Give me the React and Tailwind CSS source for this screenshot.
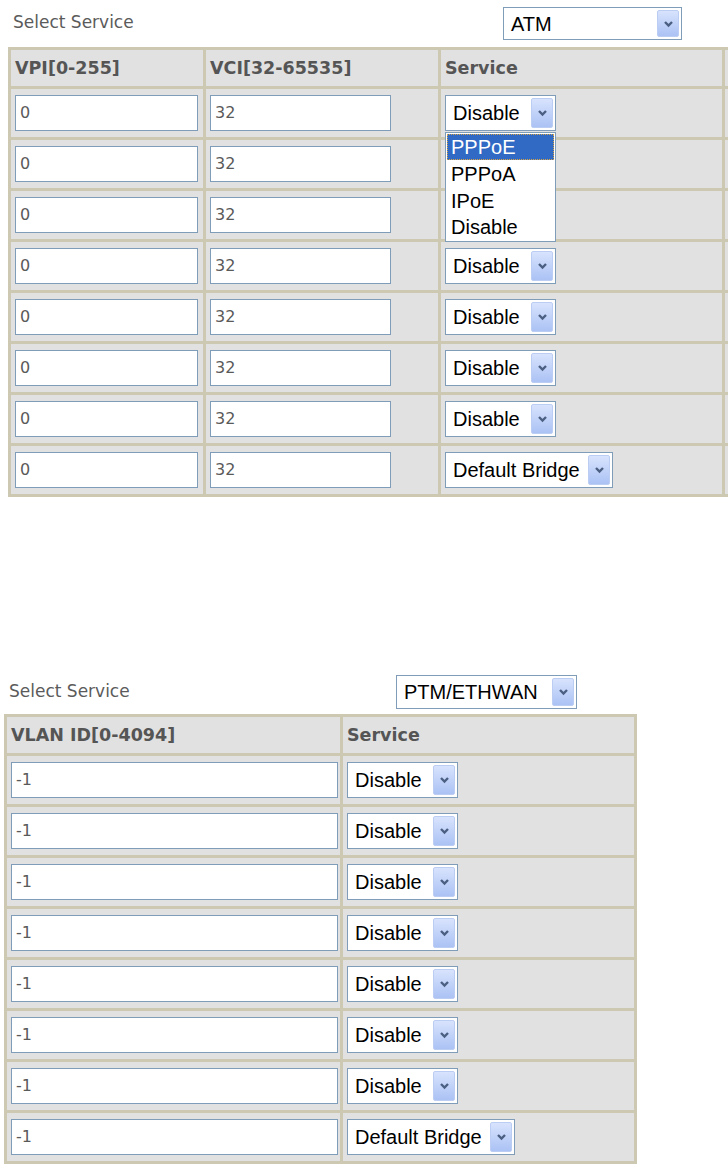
import React from "react";

const Arrow = () => (
  <span className="flex w-[22px] shrink-0 items-center justify-center rounded-[2px] border border-[#bccdf4] bg-linear-to-b from-[#d8e3fd] to-[#abc2f4]">
    <svg width="11" height="8" viewBox="0 0 11 8">
      <path d="M2 2 L5.5 5.5 L9 2" fill="none" stroke="#4b5f83" strokeWidth="2.4" />
    </svg>
  </span>
);

const Select = ({ label, className }) => (
  <div
    className={`flex items-stretch justify-between border border-[#7f9db9] bg-white py-[2px] pl-[7px] pr-[2px] font-['Liberation_Sans',Arial,sans-serif] text-[20px] leading-none text-black ${className}`}
  >
    <span className="flex items-center">{label}</span>
    <Arrow />
  </div>
);

const Input = ({ value, className }) => (
  <div
    className={`flex h-[36px] items-center border border-[#7f9db9] bg-white pl-[4px] font-['DejaVu_Sans',sans-serif] text-[16px] text-[#5a5a5a] ${className}`}
  >
    {value}
  </div>
);

const Cell = ({ children, className = "" }) => (
  <div className={`flex items-center bg-[#e1e1e1] pl-[4px] ${className}`}>{children}</div>
);

const Head = ({ children }) => (
  <div className="flex h-[36px] items-center bg-[#e1e1e1] pl-[4px] font-['DejaVu_Sans',sans-serif] text-[17.5px] font-bold text-[#555555]">
    {children}
  </div>
);

const Label = ({ className }) => (
  <div className={`font-['DejaVu_Sans',sans-serif] text-[17px] text-[#5b5b5b] ${className}`}>Select Service</div>
);

const atmRows = ["Disable", null, null, "Disable", "Disable", "Disable", "Disable", "Default Bridge"];
const ptmRows = ["Disable", "Disable", "Disable", "Disable", "Disable", "Disable", "Disable", "Default Bridge"];

export default function App() {
  return (
    <div className="h-[1172px] w-[728px] overflow-hidden bg-white">
      {/* ATM section */}
      <div className="flex h-[47px] items-start pt-[7px]">
        <Label className="w-[503px] pl-[13px] pt-[3px]" />
        <Select label="ATM" className="h-[33px] w-[179px]" />
      </div>
      <div className="ml-[8px] grid w-[800px] grid-cols-[192px_232px_281px_100px] gap-[3px] border-[3px] border-[#ccc8b2] bg-[#ccc8b2]">
        <Head>VPI[0-255]</Head>
        <Head>VCI[32-65535]</Head>
        <Head>Service</Head>
        <Head></Head>
        {atmRows.map((s, i) => (
          <React.Fragment key={i}>
            <Cell className="h-[48px]">
              <Input value="0" className="w-[183px]" />
            </Cell>
            <Cell className="h-[48px]">
              <Input value="32" className="w-[181px]" />
            </Cell>
            <Cell className="relative h-[48px]">
              {s && (
                <Select
                  label={s}
                  className={`h-[36px] ${s === "Disable" ? "w-[111px]" : "w-[168px]"}`}
                />
              )}
              {i === 0 && (
                <div className="absolute left-[4px] top-[43px] z-10 w-[111px] border border-[#7f9db9] bg-white p-[1px] font-['Liberation_Sans',Arial,sans-serif] text-[20px] leading-none text-black">
                  <div className="flex h-[26px] items-center border border-dotted border-[#d9a441] bg-[#316ac5] pl-[3px] text-white">
                    PPPoE
                  </div>
                  <div className="flex h-[27px] items-center pl-[4px]">PPPoA</div>
                  <div className="flex h-[27px] items-center pl-[4px]">IPoE</div>
                  <div className="flex h-[26px] items-center pl-[4px]">Disable</div>
                </div>
              )}
            </Cell>
            <Cell className="h-[48px]" />
          </React.Fragment>
        ))}
      </div>

      {/* PTM section */}
      <div className="mt-[178px] flex h-[39px] items-start">
        <Label className="w-[396px] pl-[9px] pt-[4px]" />
        <Select label="PTM/ETHWAN" className="h-[34px] w-[181px]" />
      </div>
      <div className="ml-[4px] grid w-[633px] grid-cols-[333px_291px] gap-[3px] border-[3px] border-[#ccc8b2] bg-[#ccc8b2]">
        <Head>VLAN ID[0-4094]</Head>
        <Head>Service</Head>
        {ptmRows.map((s, i) => (
          <React.Fragment key={i}>
            <Cell className="h-[48px]">
              <Input value="-1" className="w-[327px]" />
            </Cell>
            <Cell className="h-[48px]">
              <Select
                label={s}
                className={`h-[36px] ${s === "Disable" ? "w-[111px]" : "w-[168px]"}`}
              />
            </Cell>
          </React.Fragment>
        ))}
      </div>
    </div>
  );
}
